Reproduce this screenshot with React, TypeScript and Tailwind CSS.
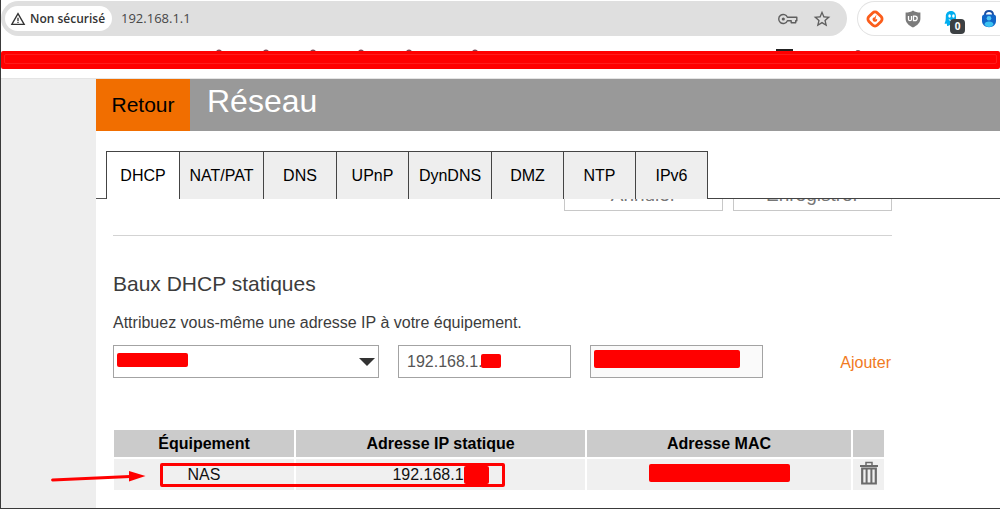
import React from 'react';
import clsx from 'clsx';
import { MdStarBorder, MdWarningAmber } from 'react-icons/md';

const tabs = [
  { label: 'DHCP', width: 'w-[73px]' },
  { label: 'NAT/PAT', width: 'w-[84px]' },
  { label: 'DNS', width: 'w-[73px]' },
  { label: 'UPnP', width: 'w-[72px]' },
  { label: 'DynDNS', width: 'w-[83px]' },
  { label: 'DMZ', width: 'w-[72px]' },
  { label: 'NTP', width: 'w-[72px]' },
  { label: 'IPv6', width: 'w-[72px]' },
];

interface RedactedProps {
  className?: string;
}

function Redacted({ className }: RedactedProps) {
  return <span aria-hidden="true" className={clsx('rounded-xs bg-[#ff0000]', className)} />;
}

function KeyIcon() {
  return (
    <svg viewBox="0 0 20 12" className="h-3 w-5" fill="none" stroke="currentColor" strokeWidth="1.4">
      <path d="M9.400 4.300A4.500 4.500 0 1 0 9.400 7.700H13.200V9.800H17.700V7.700H18.800V4.300z" strokeLinejoin="round" />
      <circle cx="5.300" cy="6" r="1.600" fill="currentColor" stroke="none" />
    </svg>
  );
}

function DiamondIcon() {
  return (
    <svg viewBox="0 0 20 20" className="h-5 w-5">
      <rect x="4" y="4" width="12" height="12" rx="3.4" transform="rotate(45 10 10)" fill="white" stroke="#fb5d1b" strokeWidth="2.8" />
      <path d="M11.500 5.200L9.800 8.200a2.300 2.300 0 1 0 2.300 1.800l-1.700.6z" fill="#fb5d1b" />
    </svg>
  );
}

function ShieldIcon() {
  return (
    <svg viewBox="0 0 20 20" className="h-5 w-5">
      <path d="M10 1.6c2 1.5 4.400 2 7.400 2v6.200c0 4-3.200 6.700-7.400 8.800-4.200-2.100-7.400-4.800-7.400-8.800V3.600c3 0 5.400-.5 7.400-2z" fill="#7b7b7b" />
      <path d="M5.500 7v3.200a1.500 1.500 0 0 0 3 0V7" fill="none" stroke="white" strokeWidth="1.300" />
      <path d="M10.500 7.200h1.500a2.200 2.200 0 0 1 0 4.400h-1.500z" fill="none" stroke="white" strokeWidth="1.300" />
    </svg>
  );
}

function GhostIcon() {
  return (
    <svg viewBox="0 0 20 20" className="h-5 w-5">
      <path d="M10 2C6.600 2 4.800 4.400 4.800 7.500c0 3-.2 5-1.300 7 .9.4 1.700.3 2.300-.1l.3 2.600c1 .2 1.800-.2 2.200-.9.700.9 1.500 1.100 2.300.3.900.6 2 .5 2.700-.3 1 .2 1.900-.2 2.200-1-.6-2.100-.5-4.600-.5-7.300C15 4.500 13.300 2 10 2z" fill="#00aef0" />
      <ellipse cx="8.600" cy="7" rx="1.300" ry="1.700" fill="white" />
      <ellipse cx="12.400" cy="7" rx="1.300" ry="1.700" fill="white" />
      <path d="M7.800 10.500c1.500 1.400 3.600 1.400 5 0" fill="none" stroke="white" />
    </svg>
  );
}

function LockIcon() {
  return (
    <svg viewBox="0 0 20 20" className="h-5 w-5">
      <path d="M6 8V5.800C6 3.500 7.600 2 10 2s4 1.500 4 3.800V8" fill="none" stroke="#1a4fa3" strokeWidth="2" />
      <path d="M3 8C3 6.500 4 5.500 5.500 5.500h9c1.500 0 2.500 1 2.500 2.500v4c0 3.500-3 6.200-7 6.200S3 15.500 3 12z" fill="#1166c8" />
      <circle cx="10" cy="9.300" r="2.300" fill="#50c8f4" />
      <path d="M5.500 15.500c0-2 2-3 4.500-3s4.500 1 4.500 3c-1 1.700-2.700 2.500-4.500 2.500s-3.500-.8-4.500-2.500z" fill="#3cc3f2" />
    </svg>
  );
}

function TrashIcon() {
  return (
    <svg viewBox="0 0 18 24" className="h-6 w-[18px]" fill="none" stroke="#6b6b6b">
      <path d="M6 4V1.500h6V4" strokeWidth="1.500" />
      <path d="M0 5h18" strokeWidth="2" />
      <path d="M2.200 7.500h13.600V22.500H2.200z" strokeWidth="2.200" />
      <path d="M6.600 8v14M11.400 8v14" strokeWidth="2" />
    </svg>
  );
}

function BrowserBar() {
  return (
    <div className="flex gap-2.5 pt-px font-['Open_Sans',sans-serif]">
      <div className="flex h-[35px] flex-1 items-center rounded-full bg-[#dfdfdf] pl-1 pr-[15px] text-[#474747]">
        <button className="flex h-[25px] w-[107px] items-center gap-1 rounded-full bg-white pl-[5px] text-xs font-semibold text-[#333]">
          <MdWarningAmber className="h-4 w-4 shrink-0" />
          <span className="whitespace-nowrap">Non sécurisé</span>
        </button>
        <input
          aria-label="Adresse"
          defaultValue="192.168.1.1"
          className="ml-[9px] min-w-0 flex-1 bg-transparent text-[13px] outline-none"
        />
        <div className="flex items-center gap-3.5 text-[#5f5f5f]">
          <button aria-label="Mots de passe"><KeyIcon /></button>
          <button aria-label="Favori"><MdStarBorder className="h-5 w-5" /></button>
        </div>
      </div>
      <div className="flex h-[35px] w-[143px] items-center gap-[18px] rounded-l-full border border-r-0 border-[#e3e3e3] pl-[7px]">
        <button aria-label="Extension"><DiamondIcon /></button>
        <button aria-label="Bloqueur"><ShieldIcon /></button>
        <button aria-label="Traqueurs" className="relative">
          <GhostIcon />
          <span className="absolute -right-1 top-2.5 flex h-[15px] w-[15px] items-center justify-center rounded bg-[#3c4043] text-[10px] font-bold text-white">
            0
          </span>
        </button>
        <button aria-label="Coffre"><LockIcon /></button>
      </div>
    </div>
  );
}

function BookmarkStrip() {
  return (
    <div className="relative flex h-[42px] items-start pt-[15px]">
      <svg viewBox="0 0 1000 4" className="absolute left-0 top-3 h-1 w-[1000px]">
        <g fill="#7a4a58">
          <circle cx="218" cy="4.500" r="3" />
          <circle cx="265" cy="4.500" r="3" />
          <circle cx="312" cy="4.500" r="3" />
          <circle cx="360" cy="4.500" r="3" />
          <circle cx="408" cy="4.500" r="3" />
          <circle cx="474" cy="4.500" r="3" />
          <circle cx="857" cy="5" r="3" />
        </g>
        <rect x="775" y="1" width="17" height="3" fill="#222" />
      </svg>
      <div className="relative h-[18px] flex-1 rounded-xs bg-[#ff0000] px-[3px] py-[3px]">
        <div className="h-2.5 rounded-xs border border-[#ff1c1c]" />
      </div>
    </div>
  );
}

function Tabs() {
  return (
    <nav className="flex h-12 text-base text-black">
      <div className="w-2.5 border-b border-[#555]" />
      {tabs.map((tab, i) => (
        <button
          key={tab.label}
          className={clsx(
            'border-l border-t border-[#444]',
            tab.width,
            i === 0 ? 'bg-white' : 'bg-[#eee]'
          )}
        >
          {tab.label}
        </button>
      ))}
      <div className="flex-1 border-b border-l border-[#444]" />
    </nav>
  );
}

function LeaseForm() {
  return (
    <form className="mt-3 flex items-center gap-[19px] text-base" onSubmit={(e) => e.preventDefault()}>
      <div className="relative">
        <select
          aria-label="Équipement"
          className="block h-[33px] w-[266px] appearance-none border border-[#a3a3a3] bg-white px-2"
        >
          <option value="" />
        </select>
        <Redacted className="absolute left-1 top-2 h-3.5 w-[71px]" />
        <svg viewBox="0 0 16 8" className="pointer-events-none absolute right-1 top-[13px] h-2 w-4">
          <path d="M0 0h16L8 8z" fill="#333" />
        </svg>
      </div>
      <div className="relative">
        <input
          aria-label="Adresse IP"
          defaultValue="192.168.1."
          className="block h-[33px] w-[173px] border border-[#a3a3a3] px-2 text-[#555]"
        />
        <Redacted className="absolute left-[83px] top-[9px] h-3.5 w-5 rounded-sm" />
      </div>
      <div className="relative">
        <input aria-label="Adresse MAC" readOnly className="block h-[33px] w-[173px] border border-[#a3a3a3] bg-[#fafafa] px-2" />
        <Redacted className="absolute left-1 top-[5px] h-[18px] w-[146px]" />
      </div>
      <a href="#ajouter" className="ml-auto pt-0.5 text-[#f17a1e]">Ajouter</a>
    </form>
  );
}

function LeaseTable() {
  return (
    <div className="relative mt-[50px]">
      <table className="w-[774px] table-fixed border-separate border-spacing-[2px] text-center text-base text-[#111]">
        <thead>
          <tr className="h-[27px] bg-[#cbcbcb] text-black">
            <th className="w-[180px] p-0">Équipement</th>
            <th className="w-[289px] p-0">Adresse IP statique</th>
            <th className="p-0">Adresse MAC</th>
            <th className="w-[31px] p-0" />
          </tr>
        </thead>
        <tbody>
          <tr className="h-[31px] bg-[#f0f0f0]">
            <td className="p-0">NAS</td>
            <td className="p-0">
              <div className="flex items-center justify-center">
                192.168.1
                <Redacted className="h-[18px] w-[25px]" />
              </div>
            </td>
            <td className="p-0">
              <Redacted className="mx-auto mb-1 block h-[18px] w-[141px]" />
            </td>
            <td className="p-0 pb-1 align-top">
              <button aria-label="Supprimer" className="mx-auto mt-0.5 block">
                <TrashIcon />
              </button>
            </td>
          </tr>
        </tbody>
      </table>
      <div className="pointer-events-none absolute left-12 top-[35px] h-6 w-[345px] rounded-xs border-3 border-[#ff0000]" />
      <svg viewBox="0 0 96 12" className="pointer-events-none absolute -left-[62px] top-[42px] h-3 w-24">
        <path d="M2.500 10L80 6.500" stroke="#ff0000" strokeWidth="2.800" strokeLinecap="round" />
        <path d="M79 1v10.500L95.500 6z" fill="#ff0000" />
      </svg>
    </div>
  );
}

export default function App() {
  return (
    <div className="flex min-h-screen flex-col border-b border-l border-[#3a3a3a] bg-white font-['Liberation_Sans',Arial,sans-serif]">
      <BrowserBar />
      <BookmarkStrip />
      <div className="flex flex-1 border-t border-[#e4e4e4]">
        <aside className="w-[95px] shrink-0 bg-[#eee]" />
        <main className="min-w-0 flex-1">
          <header className="flex h-[52px] bg-[#999]">
            <button className="w-[94px] bg-[#f16e00] text-[21px] text-black">Retour</button>
            <h1 className="pl-[17px] pt-0.5 text-[32px] leading-10 text-white">Réseau</h1>
          </header>
          <div className="pt-5">
            <Tabs />
          </div>
          <div className="ml-4 max-w-[780px] text-[#3c3c3c]">
            <div className="flex h-3 items-end justify-end gap-2.5 overflow-hidden text-[19px] text-[#777]">
              <button className="h-9 w-[159px] shrink-0 border border-[#c8c8c8] pt-1">Annuler</button>
              <button className="h-9 w-[159px] shrink-0 border border-[#c8c8c8] pt-1">Enregistrer</button>
            </div>
            <hr className="ml-px mt-6 border-[#d3d3d3]" />
            <section className="ml-px pr-px">
              <h2 className="mt-8 text-[21px] leading-8">Baux DHCP statiques</h2>
              <p className="mt-3 text-base leading-[21px]">Attribuez vous-même une adresse IP à votre équipement.</p>
              <LeaseForm />
            </section>
            <LeaseTable />
          </div>
        </main>
      </div>
    </div>
  );
}
